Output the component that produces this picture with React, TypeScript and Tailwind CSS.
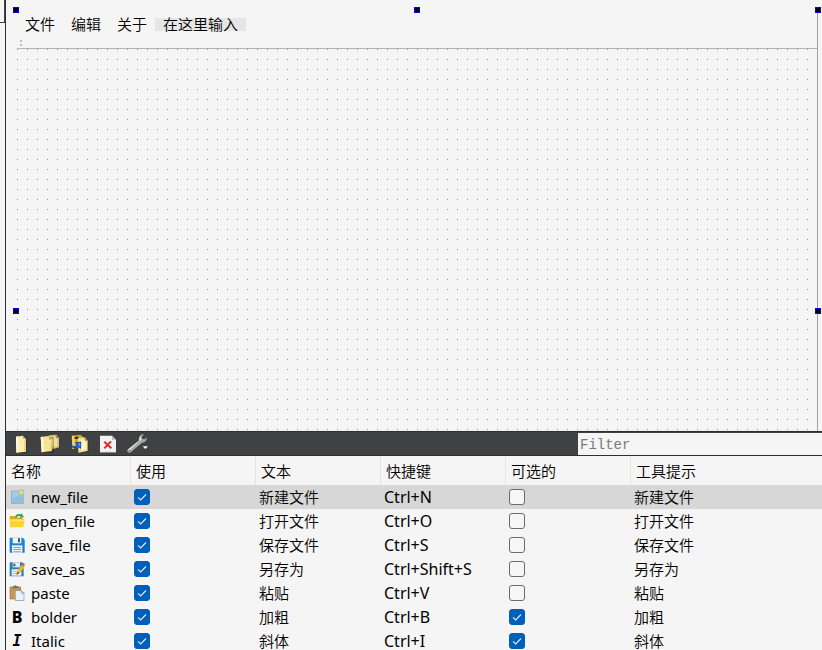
import type { ReactNode } from "react";

const NewDoc = () => (
  <svg viewBox="0 0 60 60" className="size-5">
    <path d="M18 8h29v49H18z" fill="#1c1c1a" opacity=".5" />
    <path d="M15 8l20-3 10 10v38l-28 3z" fill="#fbefb0" />
    <path d="M15 8l6-1v48l-5 1z" fill="#fffbe2" />
    <path d="M35 5v10h10z" fill="#c9ae58" />
    <path d="M40 16l5-1v37l-6 1z" fill="#ecd47e" />
  </svg>
);

const OpenDocs = () => (
  <svg viewBox="0 0 60 60" className="size-5">
    <path d="M27 4l22-2 8 9v29l-14 4H28z" fill="#d9c070" />
    <path d="M31 8l15-1 6 8v22l-12 3z" fill="#f0dfa0" />
    <path d="M47 3l9 8-8 1z" fill="#96803c" />
    <path d="M5 9h36v47H7z" fill="#1c1c1a" opacity=".4" />
    <path d="M2 9l25-3 11 10-2 35-31 4z" fill="#f7e596" />
    <path d="M2 9l8-1 2 46-7 1z" fill="#fff7d0" />
    <path d="M27 6v11l11-1z" fill="#bda450" />
    <path d="M33 19l5-1-2 33-5 1z" fill="#e6ca6a" />
  </svg>
);

const CopyDocs = () => (
  <svg viewBox="0 0 60 60" className="size-5">
    <path d="M8 5l26-3 8 7v28L10 45z" fill="#d5a72d" />
    <path d="M9 6l8-1v38l-7 2z" fill="#f4d565" />
    <path d="M17 8h12v7H17z" fill="#35332c" />
    <path d="M30 15h28v39H32z" fill="#1c1c1a" opacity=".5" />
    <path d="M27 12l20-2 9 10v31l-28 5z" fill="#f5dd87" />
    <path d="M36 17l9-1 7 8v22l-16 4z" fill="#fff4c8" />
    <path d="M47 10v10h9z" fill="#a98b38" />
    <path d="M4 30c8 7 12 7 19 3l-5-8 19-2-1 22-7-5c-10 7-21 4-25-10z" fill="#164c9f" />
    <path d="M7 34c8 6 15 5 22-1l-4-5 9-1v12l-5-4c-8 6-17 5-22-1z" fill="#4c9bf0" />
  </svg>
);

const DeleteDoc = () => (
  <svg viewBox="0 0 60 60" className="size-5">
    <path d="M6 5h36l12 12v38H6z" fill="#f3f3f3" />
    <path d="M42 5v12h12z" fill="#b9b9b9" />
    <path d="M6 53h48v2H6z" fill="#c8c8c8" />
    <path d="M19 23l21 20M39 22L19 43" stroke="#e02a2a" strokeWidth="6" />
  </svg>
);

const Wrench = () => (
  <svg viewBox="0 0 66 60" className="h-5 w-[22px]">
    <path d="M36 12C38 4 44 0 51 1l-7 7 2 7 7 1 6-6c1 9-5 16-14 16L11 55c-3 3-9 1-10-3-1-3 0-5 3-7l31-25z" fill="#a9a9a7" />
    <path d="M37 13c2-6 6-10 11-11l-7 6 2 8L6 50c-2 1-4-1-2-4l32-26z" fill="#e4e4e1" />
    <circle cx="7" cy="50" r="2" fill="#454545" />
    <path d="M47 37h16l-8 8z" fill="#fff" />
  </svg>
);

const BluePage = () => (
  <svg viewBox="0 0 48 48" className="size-4">
    <path d="M6 5h38v40H6z" fill="#7fa9c4" />
    <path d="M8 7h34v36H8z" fill="#a3cbe4" />
    <path d="M8 30l34-16v29H8z" fill="#94bfdc" />
    <circle cx="37" cy="10" r="9" fill="#b6cf86" />
    <circle cx="37" cy="10" r="4" fill="#dcebaa" />
  </svg>
);

const YellowFolder = () => (
  <svg viewBox="0 0 48 48" className="size-4">
    <path d="M2 9h14l4 5h22v28H4z" fill="#e0a91d" />
    <path d="M17 13c3-9 11-12 18-9l2-3 8 11-13 3 2-5c-6-2-9 0-11 5z" fill="#46a53b" />
    <path d="M1 18h46l-4 25H4z" fill="#fbd52e" />
    <path d="M3 20h42l-1 5H4z" fill="#ffe766" />
  </svg>
);

const Disk = () => (
  <svg viewBox="0 0 48 48" className="size-4">
    <path d="M2 2h39l6 6v39H2z" fill="#1983d4" />
    <path d="M11 2h26v17H11z" fill="#eef4f8" />
    <path d="M27 4h6v12h-6z" fill="#2c5f8f" />
    <path d="M9 25h31v22H9z" fill="#f6f6f6" />
    <path d="M13 30h23v3H13zM13 36h23v3H13zM13 42h23v2H13z" fill="#929ba2" />
  </svg>
);

const DiskPencil = () => (
  <svg viewBox="0 0 48 48" className="size-4">
    <path d="M2 4h38l4 5v37H2z" fill="#2f7fb3" />
    <path d="M11 4h22v15H11z" fill="#e5eef4" />
    <path d="M13 8h6v8h-6z" fill="#325d7d" />
    <path d="M8 25h29v19H8z" fill="#f3f3f0" />
    <path d="M11 30h17v2H11zM11 36h12v2H11z" fill="#9ba9b1" />
    <path d="M22 41l3-10 14-20 8 6-15 20z" fill="#f6b52d" />
    <path d="M39 11l3-4c3-2 7 2 5 5l-2 5z" fill="#df5d4b" />
    <path d="M22 41l3-9 6 5z" fill="#6a4a2c" />
  </svg>
);

const Clipboard = () => (
  <svg viewBox="0 0 48 48" className="size-4">
    <path d="M2 5h34v38H2z" fill="#b5803f" />
    <path d="M5 8h28v32H5z" fill="#c99655" />
    <path d="M11 8V4h4c1-4 7-4 8 0h5v6H11z" fill="#6c7680" />
    <path d="M18 16h19l9 9v22H18z" fill="#8798a9" />
    <path d="M20 18h16v9h8v18H20z" fill="#e9f0f7" />
    <path d="M36 18v9h8z" fill="#b7c6d5" />
  </svg>
);

const BoldMark = () => (
  <span aria-hidden="true" className="flex size-4 items-center justify-center font-['Noto_Sans'] text-[16px] leading-4 font-extrabold">
    B
  </span>
);

const ItalicMark = () => (
  <span aria-hidden="true" className="flex size-4 items-center justify-center font-['DejaVu_Sans_Mono'] text-[15px] leading-[18px] font-bold italic">
    I
  </span>
);

type Action = {
  name: string;
  icon: ReactNode;
  text: string;
  shortcut: string;
  checkable: boolean;
};

const actions: Action[] = [
  { name: "new_file", icon: <BluePage />, text: "新建文件", shortcut: "Ctrl+N", checkable: false },
  { name: "open_file", icon: <YellowFolder />, text: "打开文件", shortcut: "Ctrl+O", checkable: false },
  { name: "save_file", icon: <Disk />, text: "保存文件", shortcut: "Ctrl+S", checkable: false },
  { name: "save_as", icon: <DiskPencil />, text: "另存为", shortcut: "Ctrl+Shift+S", checkable: false },
  { name: "paste", icon: <Clipboard />, text: "粘贴", shortcut: "Ctrl+V", checkable: false },
  { name: "bolder", icon: <BoldMark />, text: "加粗", shortcut: "Ctrl+B", checkable: true },
  { name: "Italic", icon: <ItalicMark />, text: "斜体", shortcut: "Ctrl+I", checkable: true },
];

const columns = ["名称", "使用", "文本", "快捷键", "可选的", "工具提示"];

const tools = [
  { label: "新建", icon: <NewDoc /> },
  { label: "复制", icon: <OpenDocs /> },
  { label: "粘贴", icon: <CopyDocs /> },
  { label: "删除", icon: <DeleteDoc /> },
  { label: "配置", icon: <Wrench /> },
];

function Check({ label, checked }: { label: string; checked: boolean }) {
  return (
    <span className="grid size-4">
      <input
        type="checkbox"
        aria-label={label}
        defaultChecked={checked}
        className="peer col-start-1 row-start-1 size-4 appearance-none rounded-[3px] border border-[#6b6b6b] bg-[#f6f6f6] checked:border-[#005fb8] checked:bg-[#005fb8]"
      />
      <svg
        viewBox="0 0 16 16"
        className="pointer-events-none invisible col-start-1 row-start-1 size-4 peer-checked:visible"
        fill="none"
        stroke="#e4eefa"
        strokeWidth="1.1"
      >
        <path d="M4 8.3l2.7 2.6L12 5.5" />
      </svg>
    </span>
  );
}

const Handle = ({ className }: { className: string }) => (
  <span className={`absolute size-1.5 border border-[#0000ff] bg-black ${className}`} />
);

function FormCanvas() {
  return (
    <section className="flex min-h-0 flex-1 pt-2.5 pr-1 pl-[11px]">
      <div className="relative flex min-w-0 flex-1 flex-col border-r border-[#a0a0a0]">
        <nav className="flex h-[29px] items-center leading-[13px]">
          <button className="h-[13px] px-2">文件</button>
          <button className="h-[13px] px-2">编辑</button>
          <button className="h-[13px] px-2">关于</button>
          <button className="h-[13px] bg-[#e6e6e6] px-2">在这里输入</button>
        </nav>
        <div className="flex h-2.5 flex-col gap-0.5 border-b border-[#b4b4b4] pt-px pl-[3px]">
          <span className="size-0.5 bg-[#bdbdbd]" />
          <span className="size-0.5 bg-[#bdbdbd]" />
        </div>
        <svg className="min-h-0 w-full flex-1" aria-hidden="true">
          <defs>
            <pattern id="dots" width="10" height="10" patternUnits="userSpaceOnUse">
              <rect width="1" height="1" fill="#8f8f8f" />
            </pattern>
          </defs>
          <rect width="100%" height="100%" fill="url(#dots)" />
        </svg>
        <Handle className="-top-[3px] -left-1" />
        <Handle className="-top-[3px] left-1/2 -ml-[3px]" />
        <Handle className="-top-[3px] -right-1" />
        <Handle className="top-[298px] -left-1" />
        <Handle className="top-[298px] -right-1" />
      </div>
    </section>
  );
}

function ActionPanel() {
  return (
    <section className="h-[219px] shrink-0 overflow-hidden">
      <div className="flex h-[25px] items-stretch border-t border-b border-[#2f2f30] bg-[#404142]">
        <div className="flex flex-1 items-center gap-[9px] pl-[5px]">
          {tools.map((tool) => (
            <button key={tool.label} aria-label={tool.label}>
              {tool.icon}
            </button>
          ))}
        </div>
        <input
          type="text"
          aria-label="Filter"
          placeholder="Filter"
          className="mt-px w-61 rounded-none bg-[#f5f5f5] px-0.5 pt-0.5 font-['Liberation_Mono',monospace] text-[14px] outline-none placeholder:text-[#7a7a7a]"
        />
      </div>
      <table className="w-full table-fixed border-collapse text-left">
        <thead>
          <tr className="h-[29px]">
            {columns.map((column, i) => (
              <th key={column} scope="col" className={`p-0 font-[350] ${i < 5 ? "w-[125px]" : ""}`}>
                <div className={`flex h-[29px] items-center pl-[5px] ${i < 5 ? "border-r border-[#e3e3e3]" : ""}`}>
                  {column}
                </div>
              </th>
            ))}
          </tr>
        </thead>
        <tbody>
          {actions.map((action, i) => (
            <tr key={action.name} className={`h-6 ${i === 0 ? "bg-[#d7d7d7]" : ""}`}>
              <td className="p-0">
                <div className="flex h-6 items-center gap-1.5 pl-[3px] font-normal">
                  {action.icon}
                  <span>{action.name}</span>
                </div>
              </td>
              <td className="p-0 pl-[3px]">
                <Check label={`${action.name} 使用`} checked />
              </td>
              <td className="p-0 pl-[3px]">{action.text}</td>
              <td className="p-0 pl-[3px] text-[16px] font-normal">{action.shortcut}</td>
              <td className="p-0 pl-[3px]">
                <Check label={`${action.name} 可选的`} checked={action.checkable} />
              </td>
              <td className="p-0 pl-[3px]">{action.text}</td>
            </tr>
          ))}
        </tbody>
      </table>
    </section>
  );
}

export default function App() {
  return (
    <div className="flex h-screen overflow-hidden bg-[#f5f5f5] font-['Noto_Sans','Noto_Sans_CJK_SC',sans-serif] text-[15px] leading-5 font-[350] text-black">
      <aside className="w-[5px] shrink-0">
        <div className="h-[23px] border-r border-b border-[#444444]" />
      </aside>
      <main className="flex min-w-0 flex-1 flex-col border-l border-[#2f2f30]">
        <FormCanvas />
        <ActionPanel />
      </main>
    </div>
  );
}
